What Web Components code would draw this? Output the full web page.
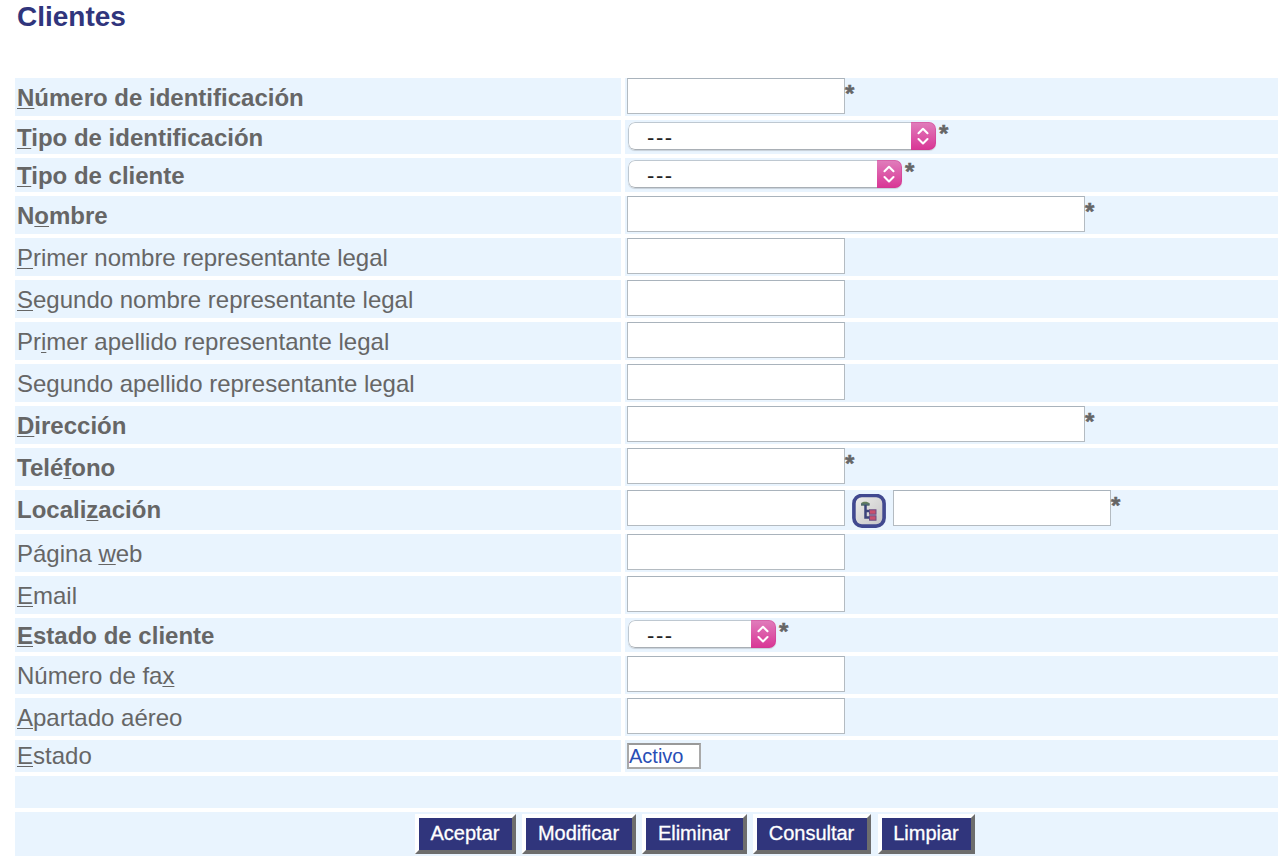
<!DOCTYPE html>
<html lang="es">
<head>
<meta charset="utf-8">
<title>Clientes</title>
<style>
html,body{margin:0;background:#fff}
body{width:1278px;height:864px;overflow:hidden;font-family:"Liberation Sans",Arial,sans-serif;color:#666}
</style>
</head>
<body>
<client-page>
<form-row label="[N]úmero de identificación" required><text-field></text-field><req-mark></req-mark></form-row>
<form-row label="[T]ipo de identificación" required h="34"><select-field style="width:308px">---</select-field><req-mark raised></req-mark></form-row>
<form-row label="[T]ipo de cliente" required h="34"><select-field style="width:274px">---</select-field><req-mark raised></req-mark></form-row>
<form-row label="N[o]mbre" required><text-field wide></text-field><req-mark></req-mark></form-row>
<form-row label="[P]rimer nombre representante legal"><text-field></text-field></form-row>
<form-row label="[S]egundo nombre representante legal"><text-field></text-field></form-row>
<form-row label="Pr[i]mer apellido representante legal"><text-field></text-field></form-row>
<form-row label="Segundo apellido representante legal"><text-field></text-field></form-row>
<form-row label="[D]irección" required><text-field wide></text-field><req-mark></req-mark></form-row>
<form-row label="Telé[f]ono" required><text-field></text-field><req-mark></req-mark></form-row>
<form-row label="Locali[z]ación" required h="40"><text-field></text-field><tree-button></tree-button><text-field></text-field><req-mark></req-mark></form-row>
<form-row label="Página [w]eb"><text-field></text-field></form-row>
<form-row label="[E]mail"><text-field></text-field></form-row>
<form-row label="[E]stado de cliente" required h="34"><select-field style="width:148px">---</select-field><req-mark raised></req-mark></form-row>
<form-row label="Número de fa[x]"><text-field></text-field></form-row>
<form-row label="[A]partado aéreo"><text-field></text-field></form-row>
<form-row label="[E]stado" h="32"><state-field>Activo</state-field></form-row>
<form-bar style="height:32px"></form-bar>
<form-bar style="height:44px">
<form-button style="width:101px">Aceptar</form-button><form-button style="width:114px">Modificar</form-button><form-button style="width:105px">Eliminar</form-button><form-button style="width:118px;margin-right:1px">Consultar</form-button><form-button style="width:97px">Limpiar</form-button>
</form-bar>
</client-page>
<script>
const define = (name, html, init) => customElements.define(name, class extends HTMLElement {
  constructor() {
    super();
    const t = document.createElement('template');
    t.innerHTML = html;
    this.attachShadow({mode: 'open'}).append(t.content.cloneNode(true));
    if (init) init(this);
  }
});

define('client-page', `<style>
:host{display:block;padding-left:15px}
h1{margin:0;padding:1px 0 0 2px;height:78px;box-sizing:border-box;font-size:28px;line-height:32px;font-weight:bold;color:#30357c}
main{display:flex;flex-direction:column;gap:4px}
</style><h1>Clientes</h1><main><slot></slot></main>`);

define('form-row', `<style>
:host{display:grid;grid-template-columns:606px 1fr;gap:4px;height:38px}
.l,.c{background:#e9f4fe;display:flex}
.l{align-items:center;padding:2px 0 0 2px;font-size:24px;line-height:28px;white-space:pre}
:host([h="40"]) .l,:host([h="32"]) .l{padding-top:0}
:host([required]) .l{font-weight:bold}
.c{align-items:flex-start;padding-left:2px}
u{text-decoration-thickness:1.4px;text-underline-offset:2px;text-decoration-skip-ink:none}
</style><div class="l"><span></span></div><div class="c"><slot></slot></div>`, el => {
  const h = el.getAttribute('h');
  if (h) el.style.height = h + 'px';
  el.shadowRoot.querySelector('span').innerHTML = el.getAttribute('label').replace('[', '<u>').replace(']', '</u>');
});

define('text-field', `<style>
:host{display:block;width:218px;height:36px}
:host([wide]){width:458px}
div{box-sizing:border-box;width:100%;height:100%;background:#fff;border:1px solid #b4bbc1;border-top-color:#a9b3bc}
</style><div></div>`);

define('select-field', `<style>
:host{display:flex;box-sizing:border-box;height:28px;margin:2px 3px 0 1px;border-radius:7px;background:#fff;box-shadow:0 1px 1px rgba(0,0,0,.15);overflow:hidden;color:#222}
.v{flex:1;box-sizing:border-box;border:1px solid #bec8d1;border-bottom-color:#a9afb5;border-right:0;border-radius:7px 0 0 7px;padding-left:18px;font-size:22px;line-height:29px;letter-spacing:1.6px}
svg{display:block;width:25px;height:28px;flex:none}
</style><div class="v"><slot></slot></div><svg viewBox="0 0 25 28"><defs><linearGradient id="g" x2="0" y2="1"><stop offset="0" stop-color="#e07ebc"/><stop offset="1" stop-color="#d93595"/></linearGradient></defs><path fill="url(#g)" d="M0 0h25v28H0z"/><path d="M0 .5h18a6.500 6.500 0 0 1 6.500 6.500v14a6.500 6.500 0 0 1-6.500 6.500H0" fill="none" stroke="#c83c8c" stroke-opacity=".4"/><path d="M7.500 11.200 12 6.800l4.500 4.400M7.500 17l4.500 4.400 4.500-4.400" fill="none" stroke="#fff" stroke-width="2.100" stroke-linecap="round" stroke-linejoin="round"/></svg>`);

define('req-mark', `<style>
:host{display:block;font-weight:bold;font-size:24px;line-height:28px;padding-top:2px;-webkit-text-stroke:.5px #666}
:host([raised]){padding-top:0}
</style>*`);

define('tree-button', `<style>
:host{display:block;width:34px;height:34px;margin:4px 7px 0}
svg{display:block}
</style><svg width="34" height="34" viewBox="0 0 34 34"><defs><linearGradient id="p" x2="1" y2="1"><stop stop-color="#eeeeec"/><stop offset="1" stop-color="#c4c3c4"/></linearGradient></defs><rect x="1.900" y="1.500" width="30.200" height="30.600" rx="8" fill="url(#p)" stroke="#414990" stroke-width="3.600"/><path d="M9 9.500c1-2.500 7-2.500 8.500 0v2H9z" fill="#66805c"/><path d="M9 10.500h8.500" stroke="#4f6b70" stroke-width="2"/><path d="M13.500 11v12.500H18M13.500 17H18" fill="none" stroke="#3c447b" stroke-width="2.500"/><rect x="17.500" y="15.800" width="6.500" height="4.400" fill="#c9506e" stroke="#6a4c84"/><rect x="17.500" y="21.800" width="6.500" height="4.400" fill="#c9506e" stroke="#6a4c84"/></svg>`);

define('state-field', `<style>
:host{display:block;box-sizing:border-box;width:74px;height:26px;margin-top:3px;border:2px solid #a9a9a9;border-top-color:#999;background:#fff;color:#284eb5;font-size:20px;line-height:22px}
</style><slot></slot>`);

define('form-bar', `<style>
:host{display:flex;box-sizing:border-box;background:#e9f4fe;justify-content:flex-start;align-items:flex-start;gap:6px;padding:2px 0 0 400px}
</style><slot></slot>`);

define('form-button', `<style>
:host{display:block;box-sizing:border-box;height:40px;border:4px solid;border-color:#fff #6d6d6d #6d6d6d #fff;background:#30357c;color:#fff;font-size:20px;line-height:30px;text-align:center;text-indent:-1px;white-space:nowrap;-webkit-text-stroke:.3px #fff}
</style><slot></slot>`);
</script>
</body>
</html>
